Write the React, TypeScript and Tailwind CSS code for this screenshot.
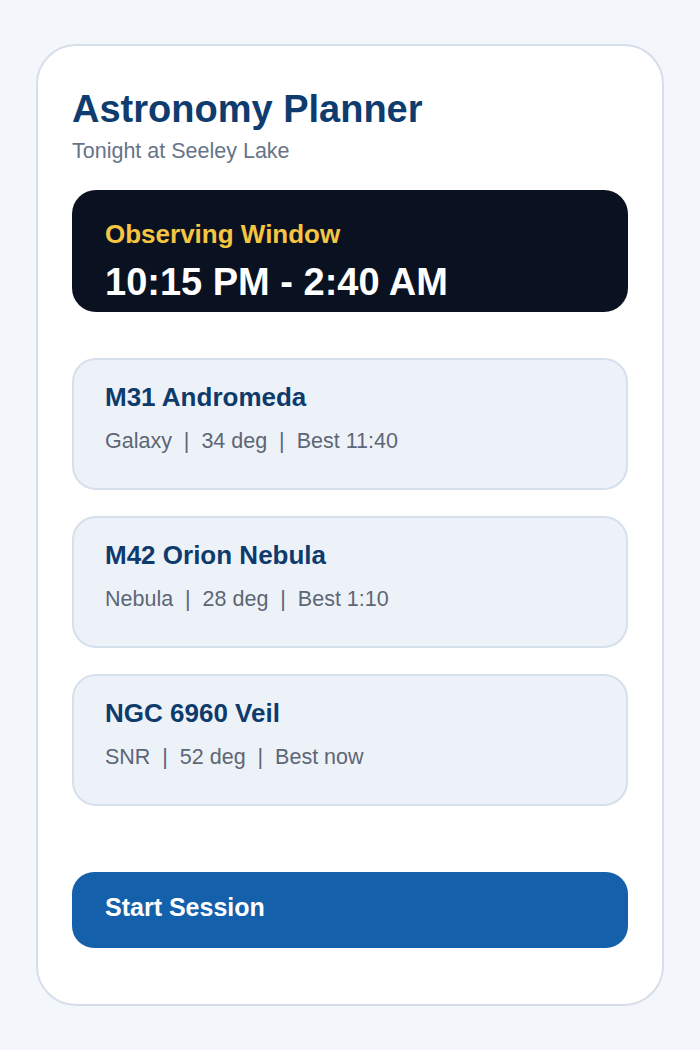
import React from 'react';

const TARGETS = [
  { name: 'M31 Andromeda', meta: ['Galaxy', '34 deg', 'Best 11:40'] },
  { name: 'M42 Orion Nebula', meta: ['Nebula', '28 deg', 'Best 1:10'] },
  { name: 'NGC 6960 Veil', meta: ['SNR', '52 deg', 'Best now'] }
];

const TargetCard: React.FC<{ name: string; meta: string[] }> = ({ name, meta }) => (
  <div className="h-[132px] rounded-[24px] border-2 border-[#d6dfec] bg-[#edf2f9] px-[31px] pt-[22px]">
    <div className="text-[26px] leading-[30px] font-bold text-[#0e3b6c]">{name}</div>
    <div className="mt-[17px] text-[21.5px] leading-[24px] text-[#5d6675] whitespace-pre">{meta.join('  |  ')}</div>
  </div>
);

export default function App() {
  return (
    <div className="min-h-[1050px] bg-[#f3f6fb] pt-[44px] px-[36px] font-['Liberation_Sans',Arial,sans-serif]">
      <div className="h-[962px] rounded-[40px] border-2 border-[#d6deeb] bg-white px-[34px] pt-[43px]">
        <h1 className="text-[38px] leading-[40px] font-bold text-[#0e3c6e]">Astronomy Planner</h1>
        <p className="mt-[10px] text-[21.5px] leading-[24px] text-[#667489]">Tonight at Seeley Lake</p>

        <div className="mt-[27px] h-[122px] rounded-[24px] bg-[#0a1221] px-[33px] pt-[29px]">
          <div className="text-[26px] leading-[30px] font-bold text-[#f6c541]">Observing Window</div>
          <div className="mt-[11px] text-[38px] leading-[44px] font-bold text-white">10:15 PM - 2:40 AM</div>
        </div>

        <div className="mt-[46px] flex flex-col gap-[26px]">
          {TARGETS.map((t) => (
            <TargetCard key={t.name} name={t.name} meta={t.meta} />
          ))}
        </div>

        <button type="button" className="mt-[66px] flex items-start h-[76px] w-full rounded-[22px] bg-[#1560aa] px-[33px] pt-[20px] text-left">
          <span className="block text-[25px] leading-[30px] font-bold text-white">Start Session</span>
        </button>
      </div>
    </div>
  );
}
